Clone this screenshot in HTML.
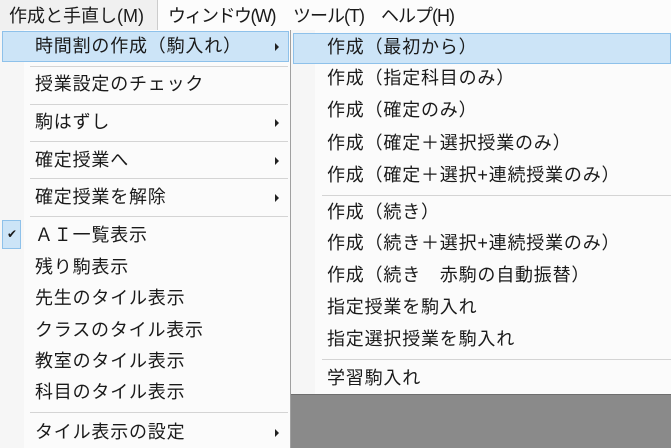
<!DOCTYPE html>
<html><head><meta charset="utf-8"><style>
*{margin:0;padding:0;box-sizing:border-box}
body{width:671px;height:448px;overflow:hidden;background:#fff;position:relative;font-family:"Liberation Sans","Noto Sans CJK JP",sans-serif;font-size:18px;letter-spacing:0.8px;color:#1a1a1a}
.a{position:absolute;white-space:nowrap}
.t{position:absolute;white-space:nowrap;line-height:20px}
.sep{position:absolute;height:1px;background:#d4d4d4}
.arr{position:absolute;width:0;height:0;border-left:4px solid #222;border-top:4px solid transparent;border-bottom:4px solid transparent}
</style></head><body>
<div class="a" style="left:0;top:0;width:671px;height:31px;background:#fcfcfc"></div>
<div class="a" style="left:0;top:0;width:158px;height:31px;background:#f0f0f0;border-right:1px solid #ccc"></div>
<div class="t" style="left:9px;top:6px;letter-spacing:0">作成と手直し(M)</div>
<div class="t" style="left:168px;top:6px;letter-spacing:-1.5px">ウィンドウ(W)</div>
<div class="t" style="left:293px;top:6px;letter-spacing:-1px">ツール(T)</div>
<div class="t" style="left:381px;top:6px;letter-spacing:-1px">ヘルプ(H)</div>

<!-- left menu -->
<div class="a" style="left:0;top:30px;width:291px;height:418px;background:#fbfbfb;border-right:1px solid #a0a0a0"></div>
<div class="a" style="left:0;top:30px;width:24px;height:418px;background:#f6f6f6"></div>
<div class="a" style="left:2px;top:31px;width:287px;height:31px;background:#cce4f7;border:1px solid #8ec1ea"></div>
<div class="a" style="left:2px;top:220px;width:19px;height:29px;background:#cce4f7;border:1px solid #8ec1ea"></div>
<div class="t" style="left:7px;top:224px;font-size:12px">✔</div>
<div class="t" style="left:35px;top:36px">時間割の作成（駒入れ）</div>
<div class="t" style="left:35px;top:74px">授業設定のチェック</div>
<div class="t" style="left:35px;top:112px">駒はずし</div>
<div class="t" style="left:35px;top:150px">確定授業へ</div>
<div class="t" style="left:35px;top:187px">確定授業を解除</div>
<div class="t" style="left:35px;top:225px">ＡＩ一覧表示</div>
<div class="t" style="left:35px;top:257px">残り駒表示</div>
<div class="t" style="left:35px;top:288px">先生のタイル表示</div>
<div class="t" style="left:35px;top:320px">クラスのタイル表示</div>
<div class="t" style="left:35px;top:351px">教室のタイル表示</div>
<div class="t" style="left:35px;top:382px">科目のタイル表示</div>
<div class="t" style="left:35px;top:422px">タイル表示の設定</div>
<div class="sep" style="left:30px;top:66px;width:258px"></div>
<div class="sep" style="left:30px;top:104px;width:258px"></div>
<div class="sep" style="left:30px;top:141px;width:258px"></div>
<div class="sep" style="left:30px;top:178px;width:258px"></div>
<div class="sep" style="left:30px;top:216px;width:258px"></div>
<div class="sep" style="left:30px;top:412px;width:258px"></div>
<div class="arr" style="left:275px;top:43px"></div>
<div class="arr" style="left:275px;top:119px"></div>
<div class="arr" style="left:275px;top:157px"></div>
<div class="arr" style="left:275px;top:194px"></div>
<div class="arr" style="left:275px;top:429px"></div>

<!-- gray background -->
<div class="a" style="left:291px;top:393px;width:380px;height:55px;background:#8a8a8a;border-top:2px solid #6e6e6e"></div>

<!-- right submenu -->
<div class="a" style="left:290px;top:30px;width:381px;height:364px;background:#fbfbfb;border-left:1px solid #a0a0a0"></div>
<div class="a" style="left:291px;top:30px;width:24px;height:364px;background:#f6f6f6"></div>
<div class="a" style="left:293px;top:33px;width:378px;height:31px;background:#cce4f7;border:1px solid #8ec1ea"></div>
<div class="t" style="left:327px;top:37px">作成（最初から）</div>
<div class="t" style="left:327px;top:68px">作成（指定科目のみ）</div>
<div class="t" style="left:327px;top:100px">作成（確定のみ）</div>
<div class="t" style="left:327px;top:133px">作成（確定＋選択授業のみ）</div>
<div class="t" style="left:327px;top:165px">作成（確定＋選択+連続授業のみ）</div>
<div class="t" style="left:327px;top:202px">作成（続き）</div>
<div class="t" style="left:327px;top:233px">作成（続き＋選択+連続授業のみ）</div>
<div class="t" style="left:327px;top:265px">作成（続き　赤駒の自動振替）</div>
<div class="t" style="left:327px;top:297px">指定授業を駒入れ</div>
<div class="t" style="left:327px;top:329px">指定選択授業を駒入れ</div>
<div class="t" style="left:327px;top:368px">学習駒入れ</div>
<div class="sep" style="left:322px;top:195px;width:349px"></div>
<div class="sep" style="left:322px;top:359px;width:349px"></div>
</body></html>
